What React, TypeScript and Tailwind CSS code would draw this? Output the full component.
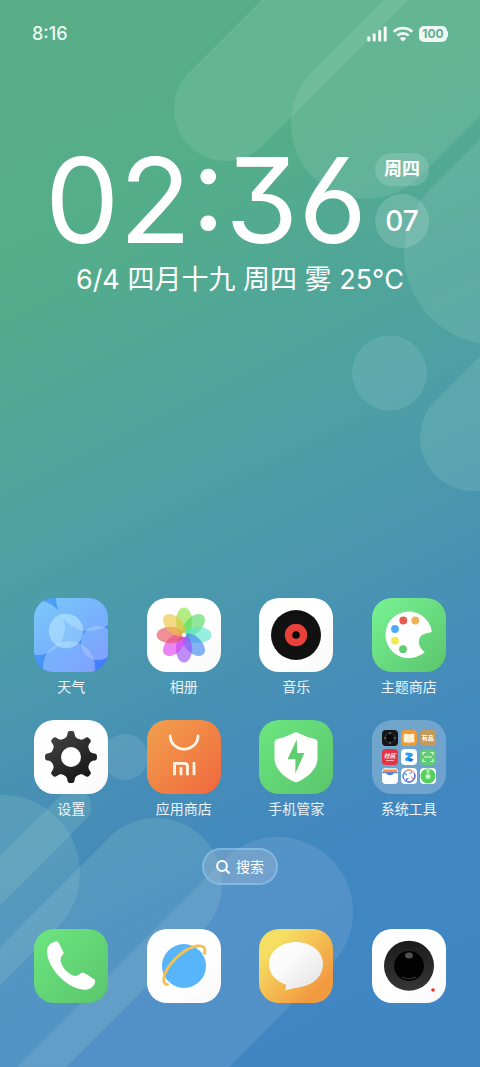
import type { ReactNode } from "react";

function Wallpaper() {
  return (
    <svg
      className="absolute inset-0 -z-10 h-full w-full"
      viewBox="0 0 480 1067"
      preserveAspectRatio="xMidYMid slice"
      aria-hidden="true"
    >
      <defs>
        <linearGradient id="sky" gradientUnits="userSpaceOnUse" x1="40" y1="40" x2="500" y2="960">
          <stop offset="0" stopColor="#58ad88" />
          <stop offset="0.2" stopColor="#54ad8a" />
          <stop offset="0.45" stopColor="#4da0a4" />
          <stop offset="0.67" stopColor="#478fb6" />
          <stop offset="0.83" stopColor="#4187c1" />
          <stop offset="1" stopColor="#4086c3" />
        </linearGradient>
      </defs>
      <rect width="480" height="1067" fill="url(#sky)" />
      <g stroke="#c0ecd4" strokeOpacity="0.14" strokeLinecap="round" fill="none">
        <path d="M226 109L546 -211" strokeWidth="104" />
        <path d="M366 124L686 -196" strokeWidth="150" />
        <path d="M496 253L816 -67" strokeWidth="184" />
        <path d="M473 438L793 118" strokeWidth="106" />
        <path d="M2 873L-318 1193" strokeWidth="156" />
        <path d="M74 807L-246 1127" strokeWidth="35" />
        <path d="M156 884L-164 1204" strokeWidth="132" />
      </g>
      <path d="M278 912L-42 1232" stroke="#cfe0f0" strokeOpacity="0.13" strokeWidth="150" strokeLinecap="round" />
      <g fill="#c8e4ea" fillOpacity="0.14">
        <circle cx="389.5" cy="373" r="37.5" />
        <circle cx="125" cy="757" r="23" />
      </g>
    </svg>
  );
}

function Art({ children }: { children: ReactNode }) {
  return (
    <svg viewBox="0 0 74 74" className="h-full w-full" aria-hidden="true">
      {children}
    </svg>
  );
}

function Weather() {
  return (
    <Art>
      <defs>
        <linearGradient id="wx-bg" x1="0" y1="0" x2="1" y2="1">
          <stop offset="0" stopColor="#4da8f5" />
          <stop offset="1" stopColor="#4279ff" />
        </linearGradient>
        <linearGradient id="wx-c" gradientUnits="userSpaceOnUse" x1="0" y1="0" x2="60" y2="80">
          <stop offset="0" stopColor="#a0e4ff" />
          <stop offset="0.5" stopColor="#9fd0ff" />
          <stop offset="1" stopColor="#b3bcff" />
        </linearGradient>
      </defs>
      <rect width="74" height="74" fill="url(#wx-bg)" />
      <g fill="url(#wx-c)" fillOpacity="0.55">
        <circle cx="55" cy="0" r="33" />
        <circle cx="4" cy="30" r="27" />
        <circle cx="35" cy="69" r="26" />
        <circle cx="64" cy="45" r="17" />
      </g>
      <circle cx="32" cy="33" r="17.3" fill="#c4f0ff" fillOpacity="0.52" />
    </Art>
  );
}

const petals = ["#86e23c", "#55da62", "#5be6cc", "#3f86f0", "#9b4cf2", "#e040ee", "#e8525a", "#eac43e"];

function Photos() {
  return (
    <Art>
      {petals.map((color, i) => (
        <ellipse
          key={color}
          cx="37"
          cy="23.3"
          rx="8.2"
          ry="13.7"
          fill={color}
          fillOpacity="0.64"
          transform={`rotate(${i * 45} 37 37)`}
        />
      ))}
      <circle cx="37" cy="37" r="2.2" fill="#fff" />
    </Art>
  );
}

function Music() {
  return (
    <Art>
      <circle cx="37" cy="37" r="25" fill="#111" />
      <circle cx="37" cy="37" r="11.2" fill="#e8413a" />
      <circle cx="37" cy="37" r="3.8" fill="#0c0808" />
    </Art>
  );
}

function Themes() {
  return (
    <Art>
      <path
        d="M59.8 33.5A23.3 23.3 0 1 0 48.5 57Q52 55.5 52.6 54C46 49.5 44.5 40 51 36.5C54 34.8 58 35.2 59.8 33.5Z"
        fill="#fff"
      />
      <circle cx="31.3" cy="22.5" r="3.9" fill="#e95c54" />
      <circle cx="43.3" cy="22.5" r="3.9" fill="#edb45c" />
      <circle cx="23" cy="31" r="3.9" fill="#4daaf8" />
      <circle cx="23" cy="42.7" r="3.9" fill="#f0ec50" />
      <circle cx="31" cy="51.2" r="3.9" fill="#5fcf73" />
    </Art>
  );
}

function Settings() {
  return (
    <Art>
      <defs>
        <linearGradient id="gear" gradientUnits="userSpaceOnUse" x1="20" y1="12" x2="52" y2="62">
          <stop offset="0" stopColor="#444" />
          <stop offset="1" stopColor="#141414" />
        </linearGradient>
        <mask id="gear-mask">
          <circle cx="37" cy="37" r="19.3" fill="#fff" />
          {[0, 45, 90, 135, 180, 225, 270, 315].map((a) => (
            <path
              key={a}
              d="M28.5 19.5C32.5 18 33 16.5 33.5 13.5C33.8 11.500 34.5 11 37 11C39.5 11 40.2 11.500 40.5 13.5C41 16.5 41.5 18 45.5 19.5L37 30Z"
              fill="#fff"
              transform={`rotate(${a} 37 37)`}
            />
          ))}
          <circle cx="37" cy="37" r="10" fill="#000" />
        </mask>
      </defs>
      <rect width="74" height="74" fill="url(#gear)" mask="url(#gear-mask)" />
    </Art>
  );
}

function Store() {
  return (
    <Art>
      <g fill="none" stroke="#fff5e6" strokeWidth="2.8">
        <path d="M23.2 16A13.9 13.2 0 0 0 51 16" strokeLinecap="round" />
        <path d="M27.5 55.2V43.3H37.5Q40.5 43.3 40.5 46.500V55.2M34 47V55.2M47 42V55.2" />
      </g>
    </Art>
  );
}

function Security() {
  return (
    <Art>
      <path
        d="M34.5 13Q37 11.700 39.5 13C45 16 51 18 56 19Q58.5 19.7 58.5 22V38C58.5 49 49 57 39.5 61.5Q37 62.8 34.5 61.5C25 57 15.5 49 15.5 38V22Q15.5 19.7 18 19C23 18 29 16 34.5 13Z"
        fill="#fff"
      />
      <path d="M37.8 19.5L28.5 39.3H36.5L36.3 53.5L45.5 33H38.2Z" fill="#60cd71" />
    </Art>
  );
}

function Phone() {
  return (
    <Art>
      <path
        d="M13 22C13 16 18 13.2 21.5 12.4C23 12.1 24 12.6 24.7 14L29.8 24C28 27 26.5 28 26.5 31.5C27.5 38 34.5 46 41 47C44.5 47 46 44 49 43.5C53 45 57 48 60.8 50.8C62.5 54.5 58 60.7 51 60.7C32 60 13 38 13 22Z"
        fill="#fff"
      />
    </Art>
  );
}

function Browser() {
  return (
    <Art>
      <circle cx="37" cy="37" r="22" fill="#58b5fa" />
      <path
        d="M56.5 27C58 20 56 18 50 19.5M16.5 49C17 54 19 55 23 53.5"
        fill="none"
        stroke="#fff"
        strokeWidth="2"
      />
      <path
        d="M57.5 24.5C58.5 21 58.5 16 50 17C36 19 17.5 38 16.8 50C16.5 54.5 18 55.5 20.5 55.5"
        fill="none"
        stroke="#f4c04f"
        strokeWidth="2.9"
        strokeLinecap="round"
      />
    </Art>
  );
}

function Messages() {
  return (
    <Art>
      <defs>
        <linearGradient id="bubble" x1="0" y1="0" x2="1" y2="1">
          <stop offset="0" stopColor="#fff" />
          <stop offset="0.4" stopColor="#fafafa" />
          <stop offset="1" stopColor="#e2e2e2" />
        </linearGradient>
      </defs>
      <path
        d="M37 13C52 13 64 22.5 64 35C64 47 55 55 44 57.5C38 58.6 31 60 25.8 61.5C27 59.5 27.2 57.5 26.5 55.5C16 52 10 44 10 35C10 22.5 22 13 37 13Z"
        fill="url(#bubble)"
      />
    </Art>
  );
}

function Camera() {
  return (
    <Art>
      <defs>
        <linearGradient id="lens" x1="0" y1="0" x2="0" y2="1">
          <stop offset="0" stopColor="#1c1c1c" />
          <stop offset="1" stopColor="#363636" />
        </linearGradient>
      </defs>
      <circle cx="37" cy="36.7" r="25" fill="url(#lens)" />
      <circle cx="37" cy="37" r="15" fill="#020202" />
      <ellipse cx="37" cy="26.5" rx="4" ry="3" fill="#505050" />
      <path d="M30 48Q37 51.5 44 48" stroke="#3a3a3a" strokeWidth="1.2" fill="none" />
      <circle cx="61" cy="61" r="1.8" fill="#ee3322" />
    </Art>
  );
}

function Mini({ tone, children }: { tone: string; children: ReactNode }) {
  return (
    <span className={`flex size-4 items-center justify-center overflow-hidden rounded-sm ${tone}`}>{children}</span>
  );
}

function MiniArt({ children }: { children: ReactNode }) {
  return (
    <svg viewBox="0 0 16 16" className="size-4" aria-hidden="true">
      {children}
    </svg>
  );
}

function ToolsFolder() {
  return (
    <span className="grid grid-cols-3 gap-[3px]">
      <Mini tone="bg-[#161616]">
        <MiniArt>
          <circle cx="8" cy="8" r="5" fill="#0a0a0a" stroke="#444" strokeWidth="0.8" />
          <path d="M8 2.2V4.2M8 11.8V13.8M2.2 8H4.2M11.8 8H13.8" stroke="#999" strokeWidth="0.9" />
        </MiniArt>
      </Mini>
      <Mini tone="bg-[#ee9a36]">
        <MiniArt>
          <path
            d="M2.7 4Q5.5 3.2 8 4.2Q10.5 3.2 13.3 4V12.3Q10.5 11.8 8 12.8Q5.5 11.8 2.7 12.3Z"
            fill="#fdf0d8"
          />
          <path d="M8 4.2V12.8" stroke="#f8e2bc" strokeWidth="0.6" />
        </MiniArt>
      </Mini>
      <Mini tone="bg-[#c59a58]">
        <span className="text-[6px] leading-none font-bold text-white">有品</span>
      </Mini>
      <Mini tone="bg-[#e63443]">
        <span className="flex flex-col items-center gap-px">
          <span className="text-[6px] leading-none font-bold text-white italic">社区</span>
          <span className="h-px w-2 bg-white/60" />
        </span>
      </Mini>
      <Mini tone="bg-white">
        <MiniArt>
          <path
            d="M4.5 3.5L11 4L12 6.5L8.5 9L12.5 10.5L10 12.8L4 11.5L4.3 9.5L7.5 6.8L4.5 6Z"
            fill="#2f9cf5"
          />
          <path d="M8.5 9L12.5 10.5L10 12.8L7 11Z" fill="#2c5ff0" />
        </MiniArt>
      </Mini>
      <Mini tone="bg-[#5fcb72]">
        <MiniArt>
          <path
            d="M3 6V3.5H5.5M10.5 3.5H13V6M13 10V12.5H10.5M5.5 12.5H3V10M4 8H12"
            fill="none"
            stroke="#eafbe9"
            strokeWidth="1.2"
          />
        </MiniArt>
      </Mini>
      <Mini tone="bg-white">
        <MiniArt>
          <rect width="16" height="2.5" fill="#cfe4fa" />
          <rect x="1" y="1.8" width="14" height="3" fill="#f58b3c" />
          <path d="M0 4.3H16V5.2H12Q10.5 7.3 8 7.3Q5.5 7.3 4 5.2H0Z" fill="#3f7ff0" />
        </MiniArt>
      </Mini>
      <Mini tone="bg-white">
        <MiniArt>
          <g fill="none" strokeWidth="1.3" strokeLinecap="round">
            <path d="M2.3 10C1 5 5 1.700 8.5 2C11 2.200 11.500 5 9 5.300" stroke="#6aa8f5" />
            <path d="M6 2.300C11 1 14.300 5 14 8.500C13.800 11 11 11.500 10.700 9" stroke="#f2a06a" />
            <path d="M13.700 6C15 11 11 14.300 7.500 14C5 13.800 4.500 11 7 10.700" stroke="#4a6cf0" />
            <path d="M10 13.700C5 15 1.700 11 2 7.500C2.200 5 5 4.500 5.300 7" stroke="#5b8ef5" />
          </g>
        </MiniArt>
      </Mini>
      <Mini tone="bg-white">
        <MiniArt>
          <circle cx="8" cy="8" r="7.6" fill="#55d05b" />
          <path d="M8 8L5 1Q8 0 11 1Z" fill="#9ae89b" />
          <circle cx="8" cy="8.5" r="3" fill="#8fe48f" />
          <circle cx="8" cy="8.5" r="1.4" fill="#fff" />
        </MiniArt>
      </Mini>
    </span>
  );
}

type AppItem = { name: string; tone: string; icon: ReactNode };

const white = "bg-linear-to-br from-white from-60% to-[#f8f8f8]";
const green = "bg-linear-to-br from-[#6ce680] to-[#5bc56c]";

const apps: AppItem[] = [
  { name: "天气", tone: "bg-[#4a90f5]", icon: <Weather /> },
  { name: "相册", tone: white, icon: <Photos /> },
  { name: "音乐", tone: white, icon: <Music /> },
  { name: "主题商店", tone: "bg-linear-to-br from-[#78f393] to-[#5bc56c]", icon: <Themes /> },
  { name: "设置", tone: white, icon: <Settings /> },
  { name: "应用商店", tone: "bg-linear-to-br from-[#f0a04c] to-[#f0663e]", icon: <Store /> },
  { name: "手机管家", tone: green, icon: <Security /> },
  { name: "系统工具", tone: "bg-[#b4cce4]/40", icon: <ToolsFolder /> },
];

const dock: AppItem[] = [
  { name: "电话", tone: green, icon: <Phone /> },
  { name: "浏览器", tone: white, icon: <Browser /> },
  { name: "短信", tone: "bg-linear-to-br from-[#f5de62] from-20% to-[#f19a40] to-80%", icon: <Messages /> },
  { name: "相机", tone: white, icon: <Camera /> },
];

function AppTile({ tone, icon }: { tone: string; icon: ReactNode }) {
  return (
    <span className={`flex size-[74px] items-center justify-center overflow-hidden rounded-[20px] ${tone}`}>
      {icon}
    </span>
  );
}

function StatusBar() {
  return (
    <header className="flex items-center justify-between px-8 pt-6">
      <span className="text-lg leading-5 font-medium text-white/90">8:16</span>
      <div className="flex items-center gap-1.5">
        <svg viewBox="0 0 20 16" className="h-4 w-5" fill="#fff" fillOpacity="0.92" aria-hidden="true">
          <rect x="0.3" y="10.5" width="3" height="5" rx="0.8" />
          <rect x="5.7" y="7.5" width="3" height="8" rx="0.8" />
          <rect x="11.2" y="4" width="3" height="11.5" rx="0.8" />
          <rect x="16.7" y="0.5" width="3" height="15" rx="0.8" />
        </svg>
        <svg viewBox="0 0 20 16" className="h-4 w-5" fill="none" stroke="#fff" strokeOpacity="0.92" aria-hidden="true">
          <path d="M0.8 5.8C5.5 0.8 14.5 0.8 19.2 5.8" strokeWidth="2.8" />
          <path d="M4.3 9.7C7.3 6.5 12.7 6.5 15.7 9.7" strokeWidth="2.7" />
          <path
            d="M10 15.5L6.8 12.4C8.6 10.6 11.4 10.6 13.2 12.4Z"
            fill="#fff"
            fillOpacity="0.92"
            stroke="none"
          />
        </svg>
        <span className="flex items-center">
          <span className="flex h-4 w-7 items-center justify-center rounded-[5px] bg-white/90 text-[12px] leading-none font-bold text-[#5fae90]">
            100
          </span>
          <span className="h-1.5 w-px rounded-r-sm bg-white/90" />
        </span>
      </div>
    </header>
  );
}

function Clock() {
  return (
    <section className="flex flex-col items-center text-white">
      <div className="flex items-center gap-2 pr-1.5">
        <time className="text-[118px] leading-[96px] font-normal [font-feature-settings:'cv09','ss01']">02:36</time>
        <div className="flex flex-col gap-2">
          <span className="flex h-[33px] w-[54px] items-center justify-center rounded-2xl bg-white/15 text-lg leading-none font-bold">
            周四
          </span>
          <span className="flex size-[54px] items-center justify-center rounded-full bg-white/15 text-[28px] leading-none font-medium">
            07
          </span>
        </div>
      </div>
      <p className="mt-3.5 text-[27px] leading-9 whitespace-nowrap">6/4 四月十九 周四 雾 25°C</p>
    </section>
  );
}

export default function App() {
  return (
    <main className="relative isolate flex min-h-screen flex-col overflow-hidden font-['Inter','Noto_Sans_CJK_SC',sans-serif]">
      <Wallpaper />
      <StatusBar />
      <div className="pt-[108px]">
        <Clock />
      </div>
      <div className="mt-auto flex flex-col px-[15px] pb-16">
        <nav className="grid grid-cols-4 gap-y-6">
          {apps.map((app) => (
            <button key={app.name} type="button" className="flex flex-col items-center gap-[5px]">
              <AppTile tone={app.tone} icon={app.icon} />
              <span className="text-sm leading-[19px] text-white/90">{app.name}</span>
            </button>
          ))}
        </nav>
        <button
          type="button"
          className="mt-[30px] flex h-[37px] w-[76px] items-center justify-center gap-1.5 self-center rounded-full border-2 border-[#8cc8f0]/60 bg-[#a8bcd6]/35 text-sm text-white"
        >
          <svg viewBox="0 0 14 14" className="size-3.5" fill="none" stroke="#fff" strokeWidth="2" aria-hidden="true">
            <circle cx="6" cy="6" r="4.9" />
            <path d="M9.6 9.6L13 13" strokeLinecap="round" />
          </svg>
          搜索
        </button>
        <nav className="mt-11 grid grid-cols-4">
          {dock.map((app) => (
            <button key={app.name} type="button" aria-label={app.name} className="flex flex-col items-center">
              <AppTile tone={app.tone} icon={app.icon} />
            </button>
          ))}
        </nav>
      </div>
    </main>
  );
}
